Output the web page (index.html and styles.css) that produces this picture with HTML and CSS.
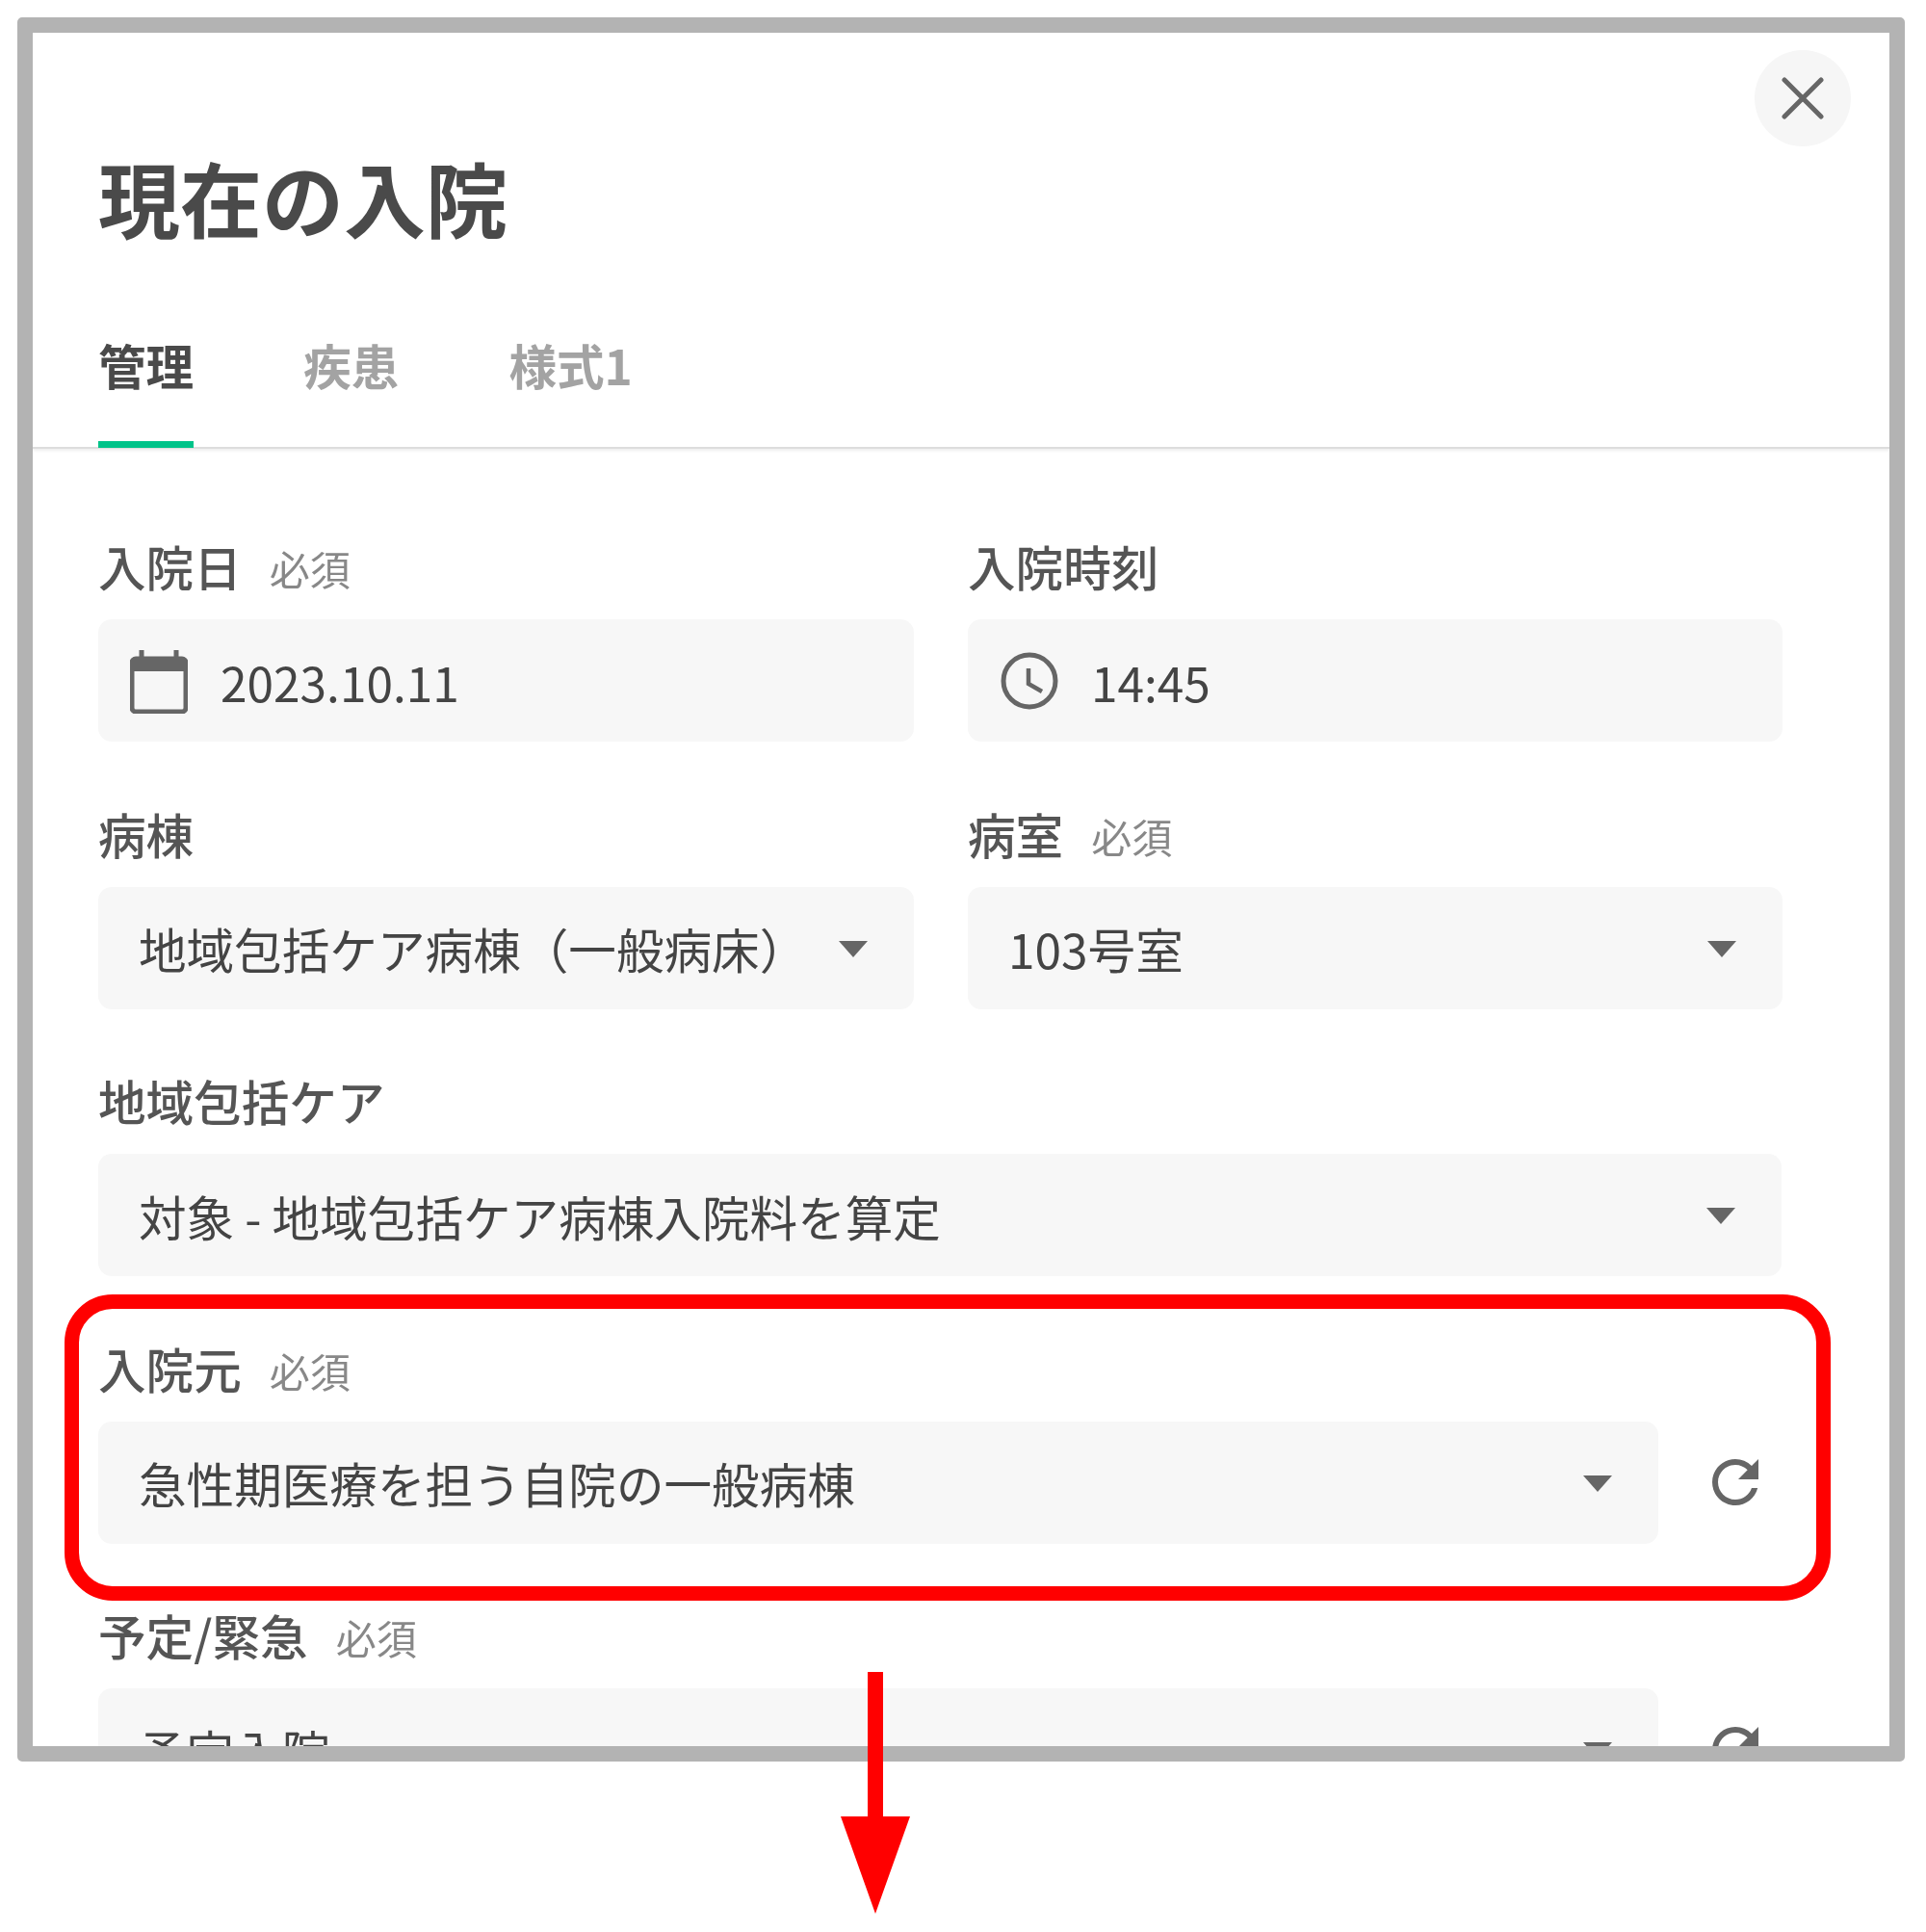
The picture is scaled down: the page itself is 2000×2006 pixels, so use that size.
FILE: index.html
```html
<!DOCTYPE html>
<html lang="ja">
  <head>
    <meta charset="UTF-8" />
    <title>現在の入院</title>
    <link rel="stylesheet" href="styles.css">
  </head>
  <body>
    <div class="frame">
      <button class="close">
        <svg width="44" height="44" viewBox="0 0 44 44"><path d="M3 3L41 41M41 3L3 41" stroke="#666" stroke-width="5" stroke-linecap="round" fill="none"/></svg>
      </button>
      <h1 class="title">現在の入院</h1>
      <div class="tabs">
        <div class="tab active">管理</div>
        <div class="tab">疾患</div>
        <div class="tab">様式1</div>
      </div>
      <div class="form">
        <div class="row">
          <div class="field">
            <div class="label">入院日<span class="req">必須</span></div>
            <div class="box box-date">
              <svg class="date-icon" width="60" height="66" viewBox="0 0 60 66">
                <path d="M12 0V9M48 0V9" stroke="#666" stroke-width="5" fill="none"/>
                <rect x="2" y="9" width="56" height="55" rx="4" fill="none" stroke="#666" stroke-width="5"/>
                <rect x="2" y="9" width="56" height="13" fill="#666"/>
              </svg>
              <span>2023.10.11</span>
            </div>
          </div>
          <div class="field">
            <div class="label">入院時刻</div>
            <div class="box box-time">
              <svg class="time-icon" width="60" height="60" viewBox="0 0 60 60">
                <circle cx="30" cy="30" r="27" fill="none" stroke="#666" stroke-width="5"/>
                <path d="M29 17V33L43 41" fill="none" stroke="#666" stroke-width="4.5"/>
              </svg>
              <span>14:45</span>
            </div>
          </div>
        </div>
        <div class="row">
          <div class="field">
            <div class="label">病棟</div>
            <div class="box select">地域包括ケア病棟（一般病床）</div>
          </div>
          <div class="field">
            <div class="label">病室<span class="req">必須</span></div>
            <div class="box select">103号室</div>
          </div>
        </div>
        <div class="field">
          <div class="label">地域包括ケア</div>
          <div class="box select">対象 - 地域包括ケア病棟入院料を算定</div>
        </div>
        <div class="field">
          <div class="label">入院元<span class="req">必須</span></div>
          <div class="with-reset">
            <div class="box select">急性期医療を担う自院の一般病棟</div>
            <svg class="reset" width="72" height="72" viewBox="0 0 24 24"><path fill="#666" d="M17.65 6.35A7.958 7.958 0 0 0 12 4c-4.42 0-7.99 3.58-7.99 8s3.57 8 7.99 8c3.73 0 6.84-2.55 7.73-6h-2.08A5.99 5.99 0 0 1 12 18c-3.31 0-6-2.69-6-6s2.69-6 6-6c1.66 0 3.14.69 4.22 1.78L13 11h7V4l-2.35 2.35z"/></svg>
          </div>
        </div>
        <div class="field">
          <div class="label">予定/緊急<span class="req">必須</span></div>
          <div class="with-reset">
            <div class="box select">予定入院</div>
            <svg class="reset" width="72" height="72" viewBox="0 0 24 24"><path fill="#666" d="M17.65 6.35A7.958 7.958 0 0 0 12 4c-4.42 0-7.99 3.58-7.99 8s3.57 8 7.99 8c3.73 0 6.84-2.55 7.73-6h-2.08A5.99 5.99 0 0 1 12 18c-3.31 0-6-2.69-6-6s2.69-6 6-6c1.66 0 3.14.69 4.22 1.78L13 11h7V4l-2.35 2.35z"/></svg>
          </div>
        </div>
      </div>
    </div>

    <!-- red callout drawn over the screenshot -->
    <div class="callout"></div>
    <svg class="arrow" width="74" height="252" viewBox="0 0 74 252">
      <path d="M29 0H45V150H73L37 251L1 150H29z" fill="#f00"/>
    </svg>
  </body>
</html>
```

FILE: styles.css
```css
* {
  box-sizing: border-box;
}
body {
  margin: 0;
  padding: 18px 0 0 18px;
  background-color: white;
  font-family: "Noto Sans CJK JP", "Noto Sans", sans-serif;
  color: #444;
}
.frame {
  position: relative;
  width: 1960px;
  height: 1811px;
  border: 16px solid #b3b3b3;
  border-radius: 5px;
  overflow: hidden;
  background-color: white;
  filter: blur(0.7px);
}
.close {
  position: absolute;
  top: 18px;
  right: 40px;
  width: 100px;
  height: 100px;
  padding: 0;
  border: none;
  border-radius: 50%;
  background-color: #f6f6f6;
  display: flex;
  justify-content: center;
  align-items: center;
}
.title {
  margin: 0;
  padding: 120px 0 0 68px;
  font-size: 85px;
  line-height: 100px;
  font-weight: 700;
  color: #4a4a4a;
}
.tabs {
  display: flex;
  gap: 114px;
  margin-top: 89px;
  padding-left: 68px;
  border-bottom: 2px solid #ddd;
  box-shadow: 0 2px 3px #eee;
}
.tab {
  padding-bottom: 45px;
  font-size: 49.6px;
  line-height: 70px;
  font-weight: 700;
  color: #a3a3a3;
  border-bottom: 7px solid transparent;
  margin-bottom: -1px;
}
.tab.active {
  color: #4a4a4a;
  border-bottom-color: #00c389;
}
.form {
  display: flex;
  flex-direction: column;
  gap: 59.5px;
  padding: 86px 112px 0 68px;
}
.row {
  display: grid;
  grid-template-columns: 847px 846px;
  gap: 56px;
}
.label {
  height: 70px;
  margin-bottom: 21px;
  font-size: 49.6px;
  line-height: 70px;
  font-weight: 500;
  color: #555;
}
.req {
  margin-left: 29px;
  font-size: 42px;
  font-weight: 400;
  color: #888;
  position: relative;
  top: -1px;
}
.box {
  position: relative;
  height: 127px;
  display: flex;
  align-items: center;
  border-radius: 14px;
  background-color: #f7f7f7;
  font-size: 49.6px;
  color: #444;
}
.box-date {
  padding-left: 33px;
}
.box-time {
  padding-left: 34px;
}
.date-icon {
  margin-right: 34px;
  margin-top: 2px;
}
.time-icon {
  margin-right: 34px;
}
.select {
  padding-left: 42px;
}
.select::after {
  content: "";
  position: absolute;
  right: 48px;
  top: 56px;
  border-left: 15px solid transparent;
  border-right: 15px solid transparent;
  border-top: 17px solid #666;
}
.with-reset {
  display: flex;
  align-items: center;
  gap: 44px;
  padding-right: 12px;
}
.with-reset .select {
  flex: 1;
}
.reset {
  flex: none;
}
.callout {
  position: absolute;
  left: 67px;
  top: 1344px;
  width: 1834px;
  height: 318px;
  border: 15px solid #f00;
  border-radius: 50px;
}
.arrow {
  position: absolute;
  left: 872px;
  top: 1736px;
}
```
